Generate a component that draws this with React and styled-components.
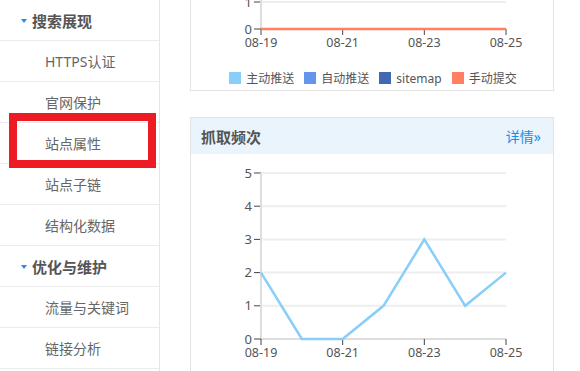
import React from "react";
import styled, { createGlobalStyle } from "styled-components";

const Global = createGlobalStyle`
  html, body { margin: 0; padding: 0; background: #fff; overflow: hidden; }
  body { font-family: "Noto Sans", "Noto Sans CJK SC", sans-serif; }
  * { box-sizing: border-box; }
`;

const FONT = `"Noto Sans", "Noto Sans CJK SC", sans-serif`;

const Page = styled.div`
  display: flex;
  width: 580px;
  height: 371px;
  overflow: hidden;
`;

const Sidebar = styled.nav`
  position: relative;
  width: 160px;
  flex: none;
  border-right: 1px solid #e6e6e6;
  display: flex;
  flex-direction: column;
`;

const Row = styled.div`
  height: 41px;
  flex: none;
  display: flex;
  align-items: center;
  gap: 5px;
  border-bottom: 1px solid #ebebeb;
  padding-left: ${(p) => (p.$heading ? "21px" : "45px")};
  font-size: ${(p) => (p.$heading ? "15px" : "14px")};
  font-weight: ${(p) => (p.$heading ? 700 : 400)};
  color: ${(p) => (p.$heading ? "#555" : "#666")};
  font-family: ${FONT};
`;

const Caret = styled.span`
  width: 0;
  height: 0;
  border-left: 3.5px solid transparent;
  border-right: 3.5px solid transparent;
  border-top: 4px solid #2a8ae2;
  margin-top: 1px;
`;

const Highlight = styled.div`
  position: absolute;
  left: 9px;
  top: 113px;
  width: 147px;
  height: 55px;
  border: 8px solid #ed1c24;
  pointer-events: none;
`;

const Main = styled.main`
  flex: 1;
  padding-left: 30px;
  display: flex;
  flex-direction: column;
  gap: 26px;
`;

const Card = styled.section`
  width: 364px;
  flex: none;
  border: 1px solid #e3e3e3;
  background: #fff;
  margin-top: ${(p) => p.$offset || 0}px;
`;

const CardHead = styled.header`
  height: 36px;
  background: #eaf4fd;
  display: flex;
  align-items: center;
  justify-content: space-between;
  padding: 0 12px 0 10px;
`;

const CardTitle = styled.h3`
  margin: 0;
  font-size: 15px;
  font-weight: 700;
  color: #555;
  font-family: ${FONT};
`;

const More = styled.a`
  font-size: 14px;
  color: #1e8be6;
  text-decoration: none;
  font-family: ${FONT};
`;

const Legend = styled.div`
  height: 29px;
  padding-top: 11px;
  display: flex;
  justify-content: center;
  gap: 10px;
  padding-left: 2px;
`;

const LegendItem = styled.div`
  display: flex;
  align-items: center;
  gap: 5px;
  height: 12px;
  font-size: 12px;
  color: #555;
  font-family: ${FONT};
`;

const Swatch = styled.span`
  width: 12px;
  height: 12px;
  background: ${(p) => p.$color};
`;

const Svg = styled.svg`
  display: block;
`;

const X0 = 70;
const X1 = 315;
const STEP = (X1 - X0) / 6;
const xLabels = ["08-19", "08-21", "08-23", "08-25"];

function Axes({ zeroY, unit, max }) {
  const grid = [];
  for (let v = 1; v <= max; v++) {
    const y = zeroY - v * unit;
    grid.push(
      <g key={v}>
        <line x1={X0} x2={X1} y1={y} y2={y} stroke="#eeeeee" strokeWidth="2" />
        <line x1={X0 - 7} x2={X0} y1={y} y2={y} stroke="#444" strokeWidth="1" />
        <text x={X0 - 9} y={y + 4.5} textAnchor="end" fontSize="13" fill="#555" fontFamily={FONT}>
          {v}
        </text>
      </g>
    );
  }
  return (
    <g>
      {grid}
      <line x1={X0} x2={X0} y1={zeroY - max * unit} y2={zeroY} stroke="#dddddd" strokeWidth="2" />
      <line x1={X0} x2={X1} y1={zeroY} y2={zeroY} stroke="#dddddd" strokeWidth="2" />
      <line x1={X0 - 7} x2={X0} y1={zeroY} y2={zeroY} stroke="#444" strokeWidth="1" />
      <text x={X0 - 9} y={zeroY + 4.5} textAnchor="end" fontSize="13" fill="#555" fontFamily={FONT}>
        0
      </text>
      {xLabels.map((l, i) => {
        const x = X0 + i * 2 * STEP;
        return (
          <g key={l}>
            <line x1={x} x2={x} y1={zeroY} y2={zeroY + 6} stroke="#444" strokeWidth="1" />
            <text x={x} y={zeroY + 18} textAnchor="middle" fontSize="12.5" fill="#555" fontFamily={FONT}>
              {l}
            </text>
          </g>
        );
      })}
    </g>
  );
}

const crawl = [2, 0, 0, 1, 3, 1, 2];

const legend = [
  { name: "主动推送", color: "#87cefa" },
  { name: "自动推送", color: "#6495ed" },
  { name: "sitemap", color: "#4169b1" },
  { name: "手动提交", color: "#ff7f60" },
];

export default function App() {
  const zero2 = 185;
  const unit2 = 33.2;
  const pts = crawl.map((v, i) => `${X0 + i * STEP},${zero2 - v * unit2}`).join(" ");
  return (
    <>
      <Global />
      <Page>
        <Sidebar>
          <Row $heading>
            <Caret />
            搜索展现
          </Row>
          <Row>HTTPS认证</Row>
          <Row>官网保护</Row>
          <Row>站点属性</Row>
          <Row>站点子链</Row>
          <Row>结构化数据</Row>
          <Row $heading>
            <Caret />
            优化与维护
          </Row>
          <Row>流量与关键词</Row>
          <Row>链接分析</Row>
          <Row />
          <Highlight />
        </Sidebar>
        <Main>
          <Card $offset={-100}>
            <Svg width="362" height="160">
              <Axes zeroY={128} unit={27} max={4} />
              <line x1={X0} x2={X1} y1={128} y2={128} stroke="#6495ed" strokeWidth="2" />
              <line x1={X0} x2={X1} y1={128} y2={128} stroke="#ff7f60" strokeWidth="2.5" />
            </Svg>
            <Legend>
              {legend.map((l) => (
                <LegendItem key={l.name}>
                  <Swatch $color={l.color} />
                  {l.name}
                </LegendItem>
              ))}
            </Legend>
          </Card>
          <Card>
            <CardHead>
              <CardTitle>抓取频次</CardTitle>
              <More href="#">详情»</More>
            </CardHead>
            <Svg width="362" height="240">
              <Axes zeroY={zero2} unit={unit2} max={5} />
              <polyline points={pts} fill="none" stroke="#87cefa" strokeWidth="2.5" strokeLinejoin="miter" />
            </Svg>
          </Card>
        </Main>
      </Page>
    </>
  );
}
